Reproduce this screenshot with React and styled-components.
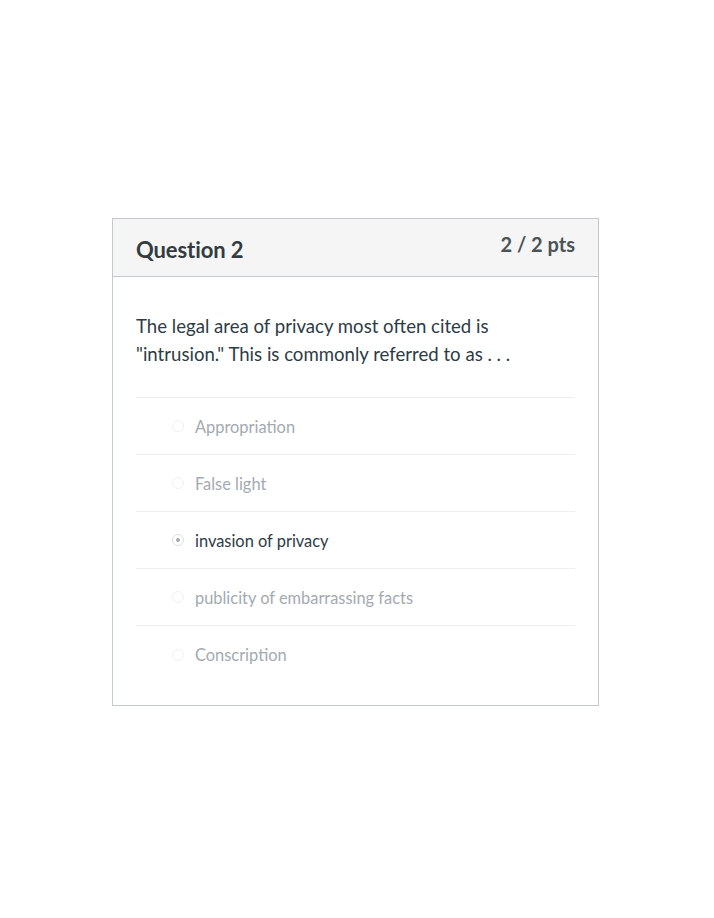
import styled, { createGlobalStyle } from 'styled-components'

const GlobalStyle = createGlobalStyle`
  body {
    margin: 0;
    background: #ffffff;
    font-family: Lato, "Open Sans", sans-serif;
  }
`

const answers = [
  { text: 'Appropriation' },
  { text: 'False light' },
  { text: 'invasion of privacy', selected: true },
  { text: 'publicity of embarrassing facts' },
  { text: 'Conscription' },
]

const App = () => {
  return (
    <Page>
      <GlobalStyle />
      <Card>
        <Header>
          <Title>Question 2</Title>
          <Points>2 / 2 pts</Points>
        </Header>
        <Body>
          <Prompt>
            The legal area of privacy most often cited is
            <br />
            "intrusion." This is commonly referred to as . . .
          </Prompt>
          <Answers>
            {answers.map((a) => (
              <Answer key={a.text}>
                <Radio $selected={a.selected} />
                <Label $selected={a.selected}>{a.text}</Label>
              </Answer>
            ))}
          </Answers>
        </Body>
      </Card>
    </Page>
  )
}

const Page = styled.div`
  padding: 218px 0 0 112px;
`
const Card = styled.div`
  width: 487px;
  box-sizing: border-box;
  border: 1px solid #c4c9cc;
  background: #ffffff;
`
const Header = styled.div`
  display: flex;
  justify-content: space-between;
  align-items: flex-start;
  height: 58px;
  box-sizing: border-box;
  padding: 0 23px;
  background: #f5f5f5;
  border-bottom: 1px solid #c4c9cc;
`
const Title = styled.h2`
  margin: 17px 0 0;
  font-size: 22px;
  font-weight: 700;
  color: #333b40;
  letter-spacing: -0.1px;
`
const Points = styled.div`
  margin-top: 13px;
  font-size: 20px;
  font-weight: 700;
  color: #4a5358;
`
const Body = styled.div`
  padding: 35px 23px 22px;
`
const Prompt = styled.p`
  margin: 0 0 29px;
  font-size: 18.6px;
  line-height: 28px;
  color: #2d3b45;
`
const Answers = styled.div`
  border-top: 1px solid #eceeef;
`
const Answer = styled.div`
  display: flex;
  align-items: center;
  height: 57px;
  box-sizing: border-box;
  padding-left: 36px;
  border-bottom: 1px solid #eceeef;
  &:last-child {
    border-bottom: none;
  }
`
const Radio = styled.span`
  width: 12px;
  height: 12px;
  border-radius: 50%;
  border: 1px solid ${(p) => (p.$selected ? '#dcdfe1' : '#eef0f1')};
  box-sizing: border-box;
  margin-right: 11px;
  display: flex;
  align-items: center;
  justify-content: center;
  &::after {
    content: '';
    width: 4px;
    height: 4px;
    border-radius: 50%;
    background: ${(p) => (p.$selected ? '#a3aab0' : 'transparent')};
  }
`
const Label = styled.span`
  font-size: 16.4px;
  color: ${(p) => (p.$selected ? '#2d3b45' : '#a3aab0')};
`

export default App
